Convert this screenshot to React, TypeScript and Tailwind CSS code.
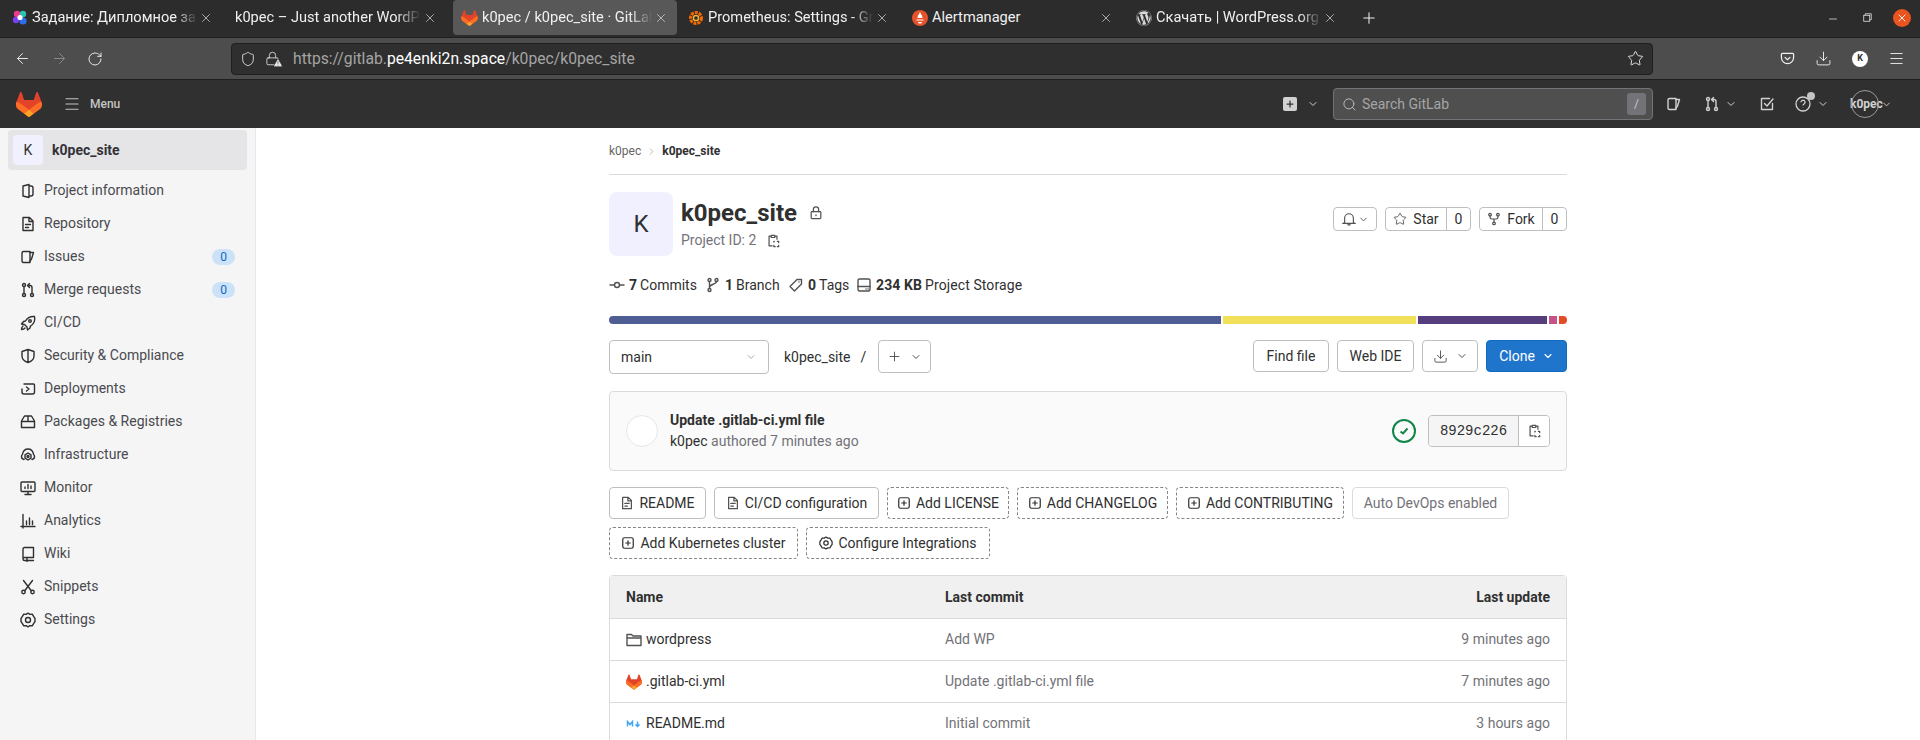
import React from 'react';
import { ArrowLeft, ArrowRight, RotateCw, Shield, Lock, Star, Download, Menu, Plus, Minus, X, Search, ChevronDown, ChevronRight, TriangleAlert } from 'lucide-react';
import { FaWordpress } from 'react-icons/fa';

const Ico: React.FC<{ className?: string; children: React.ReactNode }> = ({ className = 'w-4 h-4', children }) => (
    <svg viewBox="0 0 16 16" fill="none" stroke="currentColor" strokeWidth={1.4} strokeLinecap="round" strokeLinejoin="round" className={`shrink-0 ${className}`}>
        {children}
    </svg>
);

const Tanuki: React.FC<{ className?: string }> = ({ className = 'w-4 h-4' }) => (
    <svg viewBox="0 0 25 24" className={`shrink-0 ${className}`}>
        <path fill="#E24329" d="M24.507 9.5l-.034-.09L21.082.562a.896.896 0 00-1.694.091l-2.29 7.01H7.825L5.535.653a.898.898 0 00-1.694-.09L.451 9.411.416 9.5a6.297 6.297 0 002.09 7.278l.012.01.03.022 5.16 3.867 2.56 1.935 1.554 1.176a1.051 1.051 0 001.268 0l1.555-1.176 2.56-1.935 5.197-3.89.014-.01A6.297 6.297 0 0024.507 9.5z" />
        <path fill="#FC6D26" d="M24.507 9.5l-.034-.09a11.44 11.44 0 00-4.56 2.051l-7.447 5.632 4.742 3.584 5.197-3.89.014-.01A6.297 6.297 0 0024.507 9.5z" />
        <path fill="#FCA326" d="M7.707 20.677l2.56 1.935 1.555 1.176a1.051 1.051 0 001.268 0l1.555-1.176 2.56-1.935-4.743-3.584-4.755 3.584z" />
        <path fill="#FC6D26" d="M5.01 11.461a11.43 11.43 0 00-4.56-2.05L.416 9.5a6.297 6.297 0 002.09 7.278l.012.01.03.022 5.16 3.867 4.745-3.584-7.444-5.632z" />
    </svg>
);

const IssuesIcon = ({ className }: { className?: string }) => (
    <Ico className={className}><path d="M3.5 2.5h6.5v11H3.5a1.5 1.5 0 01-1.5-1.5V4a1.5 1.5 0 011.5-1.5z" /><path d="M10 3.5h3.5L11.5 10 10 12" /></Ico>
);
const MergeIcon = ({ className }: { className?: string }) => (
    <Ico className={className}><circle cx="4" cy="3" r="1.5" /><circle cx="4" cy="13" r="1.5" /><circle cx="12" cy="13" r="1.5" /><path d="M4 4.5v7M12 11.5V5.5a2 2 0 00-2-2H8M9.5 1.5l-2 2 2 2" /></Ico>
);
const FileIcon = ({ className }: { className?: string }) => (
    <Ico className={className}><path d="M3 1.5h6.5L13 5v9.5H3zM9 1.5V5.5h4M5.5 8.5h5M5.5 11.5h3" /></Ico>
);
const ForkIcon = ({ className }: { className?: string }) => (
    <Ico className={className}><circle cx="3.5" cy="3" r="1.5" /><circle cx="12.5" cy="3" r="1.5" /><circle cx="8" cy="13" r="1.5" /><path d="M3.5 4.5V6a2 2 0 002 2h5a2 2 0 002-2V4.5M8 8v3.5" /></Ico>
);
const ClipboardIcon = ({ className }: { className?: string }) => (
    <Ico className={className}><path d="M5.5 2.5H3.5v11H7M10.5 2.5h2V6M6 1.5h4v2.5H6z" /><path d="M9.5 8.5H9v.5M13 8.5h1.5V10M14.5 13v1.5H13M10.5 14.5H9V13" /></Ico>
);
const PlusBoxIcon = () => (
    <Ico className="w-[14px] h-[14px]"><rect x="2" y="2" width="12" height="12" rx="2" /><path d="M8 5.5v5M5.5 8h5" /></Ico>
);
const GearIcon = ({ className }: { className?: string }) => (
    <Ico className={className}><path d="M8 1.2l2 1.2 2.4-.1 1.2 2.1L15 6.5v3l-1.4 2.1-1.2 2.1-2.4-.1-2 1.2-2-1.2-2.4.1-1.2-2.1L1 9.500v-3l1.400-2.100 1.200-2.100 2.400.1z" /><circle cx="8" cy="8" r="2.500" /></Ico>
);

type NavItem = { label: string; icon: React.ReactNode; badge?: string };

const navItems: NavItem[] = [
    { label: 'Project information', icon: <Ico><path d="M3 3l6-1.500v13L3 13zM9 3h2a2 2 0 012 2v6a2 2 0 01-2 2H9" /></Ico> },
    { label: 'Repository', icon: <FileIcon /> },
    { label: 'Issues', icon: <IssuesIcon />, badge: '0' },
    { label: 'Merge requests', icon: <MergeIcon />, badge: '0' },
    { label: 'CI/CD', icon: <Ico><path d="M14.500 1.500c-4-.3-7 1-9 4.500l-2 .5-2 2.500 3 .5 2.500 2.500.5 3 2.500-2 .5-2c3.500-2 4.800-5 4-9.500z" /><circle cx="10" cy="6" r="1.300" /><path d="M3 11c-1 .8-1.500 2-1.500 3.500 1.500 0 2.700-.5 3.500-1.500" /></Ico> },
    { label: 'Security & Compliance', icon: <Ico><path d="M8 1.500l6 2v4.500c0 3.200-2.500 5.500-6 6.500-3.500-1-6-3.300-6-6.500V3.500zM8 1.500v13" /></Ico> },
    { label: 'Deployments', icon: <Ico><path d="M4 3h9.500a1 1 0 011 1v7a2 2 0 01-2 2H5M2 8v3a2 2 0 002 2M6.500 6l2.500 2-2.500 2" /></Ico> },
    { label: 'Packages & Registries', icon: <Ico><path d="M1.500 13.500V7L4.500 2h7l3 5v6.500zM1.500 7.500h13M8 2v5.500" /></Ico> },
    { label: 'Infrastructure', icon: <Ico><path d="M4 12.500a3 3 0 01-2.500-3c0-1 .5-1.800 1-2.300C3 4.500 5 2 8 2s5 2.500 5.500 5.200c.5.500 1 1.300 1 2.300a3 3 0 01-2.500 3" /><path d="M8 6l3 1.800v3.400L8 13l-3-1.800V7.800z" /><circle cx="8" cy="9.500" r="1" /></Ico> },
    { label: 'Monitor', icon: <Ico><rect x="1" y="2" width="14" height="9.500" rx="1" /><path d="M5 14.500h6M8 11.500v3M5 8.500V7M8 8.500V4.500M11 8.500V6" /></Ico> },
    { label: 'Analytics', icon: <Ico><path d="M1 13.500h14M3 1.500v13.500M6.500 11.500V8M9.500 11.500V5M12.500 11.500V8" /></Ico> },
    { label: 'Wiki', icon: <Ico><path d="M3 13V3a1.500 1.500 0 011.500-1.500h9v10h-9A1.500 1.500 0 003 13a1.500 1.500 0 001.500 1.500h9M7 11.500v4" /></Ico> },
    { label: 'Snippets', icon: <Ico><circle cx="3.500" cy="13" r="1.700" /><circle cx="12.500" cy="13" r="1.700" /><path d="M3.500 1.500l7.800 10.200M12.500 1.500L4.700 11.700" /></Ico> },
    { label: 'Settings', icon: <GearIcon /> },
];

const tabClass = 'w-[224px] h-[35px] flex items-center shrink-0 relative text-[14.6px] text-[#f0f0f0] rounded-[4px]';
const fade = 'overflow-hidden whitespace-nowrap [mask-image:linear-gradient(to_right,black_86%,transparent_99%)]';

const Tab: React.FC<{ title: string; icon?: React.ReactNode; active?: boolean; noFade?: boolean }> = ({ title, icon, active, noFade }) => (
    <div className={`${tabClass} ${active ? 'bg-[#585858] w-[220px] mx-[2px]' : ''}`}>
        <div className="w-[29px] shrink-0 flex justify-center pl-1">{icon}</div>
        <div className={`flex-1 min-w-0 ${noFade ? 'whitespace-nowrap' : fade}`}>{title}</div>
        <div className={`flex justify-start shrink-0 ${active ? 'w-[23px]' : 'w-[28px]'}`}><X className="w-[14px] h-[14px] text-[#e0e0e0]" strokeWidth={1.2} /></div>
    </div>
);

const BrowserChrome = () => (
    <>
        <div className="h-[38px] bg-[#2c2c2c] flex items-start pl-[3px] border-b border-[#1f1f1f]">
            <Tab
                title="Задание: Дипломное задание"
                icon={
                    <svg viewBox="0 0 16 16" className="w-4 h-4">
                        <circle cx="5" cy="4" r="3.200" fill="#ee3a8c" />
                        <circle cx="11" cy="4" r="3.200" fill="#2bc4b4" />
                        <circle cx="4" cy="10" r="3.200" fill="#7a3ff2" />
                        <circle cx="11" cy="11" r="3.600" fill="#2f6fed" />
                        <circle cx="8" cy="7.500" r="2.600" fill="#fff" />
                    </svg>
                }
            />
            <div className="w-[224px] h-[35px] flex items-center shrink-0 text-[14.6px] text-[#f0f0f0]">
                <div className={`flex-1 min-w-0 pl-[8px] ${fade}`}>k0pec – Just another WordPress site</div>
                <div className="w-[28px] flex justify-start shrink-0"><X className="w-[14px] h-[14px] text-[#e0e0e0]" strokeWidth={1.2} /></div>
            </div>
            <Tab active title="k0pec / k0pec_site · GitLab" icon={<Tanuki className="w-[17px] h-[16px]" />} />
            <Tab
                title="Prometheus: Settings - Grafana"
                icon={
                    <svg viewBox="0 0 16 16" className="w-4 h-4">
                        <circle cx="8" cy="8" r="5.500" fill="none" stroke="#f46800" strokeWidth="3" strokeDasharray="3 1" />
                        <circle cx="8" cy="8" r="2.600" fill="none" stroke="#fbb034" strokeWidth="1.500" />
                    </svg>
                }
            />
            <Tab
                noFade
                title="Alertmanager"
                icon={
                    <svg viewBox="0 0 16 16" className="w-4 h-4">
                        <circle cx="8" cy="8" r="8" fill="#e6522c" />
                        <path fill="#fff" d="M8 2c.5 2 2.500 3 2.500 6H5.500C5.500 5 7.500 4 8 2zM4.500 9.500h7v1h-7zM6 12h4c0 1-1 1.500-2 1.500S6 13 6 12z" />
                    </svg>
                }
            />
            <Tab title="Скачать | WordPress.org Русский" icon={<FaWordpress className="w-4 h-4 text-[#d8d8d8]" />} />
            <div className="flex justify-center w-[36px] h-[35px] items-center"><Plus className="w-[18px] h-[18px] text-[#f0f0f0]" strokeWidth={1.4} /></div>
            <div className="ml-auto flex items-center h-[35px] pr-[9px] text-[#f0f0f0]">
                <Minus className="w-[12px] h-[12px] mt-[3px]" strokeWidth={1.4} />
                <svg viewBox="0 0 12 12" className="w-[9px] h-[9px] ml-[24px]" fill="none" stroke="currentColor" strokeWidth="1"><rect x="1" y="3" width="8" height="8" /><path d="M3 3V1h8v8H9" /></svg>
                <div className="w-[18px] h-[18px] ml-[21px] rounded-full bg-[#e95420] flex items-center justify-center"><X className="w-[12px] h-[12px] text-white" strokeWidth={1.8} /></div>
            </div>
        </div>
        <div className="h-[42px] bg-[#4d4d4d] flex items-center border-b border-[#1f1f1f] text-[#f2f2f2]">
            <div className="flex items-center w-[231px] pl-[14px]">
                <ArrowLeft className="w-[17px] h-[17px]" strokeWidth={1.3} />
                <ArrowRight className="w-[17px] h-[17px] ml-[20px] text-[#8f8f8f]" strokeWidth={1.3} />
                <RotateCw className="w-[16px] h-[16px] ml-[19px]" strokeWidth={1.4} />
            </div>
            <div className="w-[1422px] h-[32px] bg-[#2f2f2f] border border-[#1f1f1f] rounded-[4px] flex items-center pl-[8px] pr-[8px]">
                <Shield className="w-[16px] h-[16px] text-[#e8e8e8]" strokeWidth={1.3} />
                <div className="relative w-[16px] h-[16px] ml-[9px]">
                    <Lock className="w-[15px] h-[15px] text-[#e8e8e8]" strokeWidth={1.3} />
                    <TriangleAlert className="absolute -bottom-[1px] -right-[2px] w-[10px] h-[10px] text-[#2f2f2f] fill-[#e8e8e8]" strokeWidth={1.5} />
                </div>
                <div className="ml-[12px] text-[15.7px] text-[#a5a5a5] whitespace-nowrap">https://gitlab.<span className="text-white">pe4enki2n.space</span>/k0pec/k0pec_site</div>
                <Star className="w-[17px] h-[17px] ml-auto text-[#ececec]" strokeWidth={1.3} />
            </div>
            <div className="flex-1 flex items-center pl-[127px]">
                <svg viewBox="0 0 16 16" className="w-[15px] h-[15px]" fill="none" stroke="currentColor" strokeWidth="1.300"><path d="M2.500 2.500h11a1 1 0 011 1V7A6.500 6.500 0 011.500 7V3.500a1 1 0 011-1z" /><path d="M5 6.500l3 2.800 3-2.800" /></svg>
                <Download className="w-[17px] h-[17px] ml-[20px]" strokeWidth={1.3} />
                <div className="w-[16px] h-[16px] ml-[20px] rounded-full bg-white text-[#303030] text-[9px] font-bold flex items-center justify-center">K</div>
                <Menu className="w-[17px] h-[17px] ml-[20px]" strokeWidth={1.3} />
            </div>
        </div>
    </>
);

const GitlabNav = () => (
    <div className="h-[48px] bg-[#303030] flex items-center text-[#d1d1d1]">
        <div className="pl-[16px] w-[63px]"><Tanuki className="w-[26px] h-[25px]" /></div>
        <Menu className="w-[18px] h-[18px] text-[#c4c4c4]" strokeWidth={1.5} />
        <div className="ml-[9px] text-[12px] font-medium text-[#c4c4c4]">Menu</div>
        <div className="ml-auto flex items-center">
            <div className="w-[14px] h-[14px] rounded-[2px] bg-[#d1d1d1] flex items-center justify-center"><Plus className="w-[10px] h-[10px] text-[#303030]" strokeWidth={3} /></div>
            <ChevronDown className="w-[12px] h-[12px] ml-[10px]" strokeWidth={2} />
            <div className="w-[320px] h-[32px] ml-[14px] bg-[#4f4f4f] border border-[#737278] rounded-[4px] flex items-center pl-[8px] pr-[6px]">
                <Search className="w-[15px] h-[15px] text-[#bfbfbf]" strokeWidth={1.5} />
                <div className="ml-[5px] text-[14px] text-[#a5a5a5]">Search GitLab</div>
                <div className="ml-auto w-[19px] h-[22px] rounded-[3px] bg-[#737278] text-[#c4c4c4] text-[12px] flex items-center justify-center">/</div>
            </div>
            <IssuesIcon className="w-[16px] h-[16px] ml-[13px]" />
            <MergeIcon className="w-[16px] h-[16px] ml-[22px]" />
            <ChevronDown className="w-[12px] h-[12px] ml-[5px]" strokeWidth={2} />
            <Ico className="w-[16px] h-[16px] ml-[22px]"><path d="M13.500 7.500v6h-11v-11h8M5.500 7.500l2.500 2.500 6-7" /></Ico>
            <div className="relative ml-[20px]">
                <svg viewBox="0 0 16 16" className="w-[16px] h-[16px]" fill="none" stroke="currentColor" strokeWidth="1.300"><circle cx="8" cy="8" r="7" /><path d="M6 6.200a2 2 0 113 1.800c-.7.400-1 .8-1 1.500M8 11.500v.3" /></svg>
                <div className="absolute -top-[4px] -right-[4px] w-[8px] h-[8px] rounded-full bg-[#c4c4c4]" />
            </div>
            <ChevronDown className="w-[12px] h-[12px] ml-[6px]" strokeWidth={2} />
            <div className="relative w-[48px] h-[28px] ml-[21px] mr-[22px] flex items-center">
                <div className="absolute left-[1px] top-0 w-[28px] h-[28px] rounded-full border border-[#9a9a9a]" />
                <div className="text-[12px] font-bold text-[#d1d1d1] whitespace-nowrap">k0pec</div>
                <ChevronDown className="absolute right-[6px] top-[9px] w-[11px] h-[11px]" strokeWidth={2} />
            </div>
        </div>
    </div>
);

const Sidebar = () => (
    <div className="w-[256px] shrink-0 bg-[#f5f5f5] border-r border-[#e8e8e8] pt-[2px] px-[8px] text-[#333238]">
        <div className="h-[40px] bg-[#e5e5e8] rounded-[4px] flex items-center pl-[5px]">
            <div className="w-[30px] h-[30px] bg-[#f0f0ff] rounded-[4px] flex items-center justify-center text-[14px] text-[#303030]">K</div>
            <div className="ml-[9px] text-[14px] font-bold">k0pec_site</div>
        </div>
        <div className="mt-[4px]">
            {navItems.map((item) => (
                <div key={item.label} className="h-[33px] flex items-center pl-[12px] pr-[12px] text-[14px] text-[#4a4a4f]">
                    <div className="text-[#303030]">{item.icon}</div>
                    <div className="ml-[8px]">{item.label}</div>
                    {item.badge && (
                        <div className="ml-auto w-[23px] h-[16px] rounded-full bg-[#cbe2f9] text-[#1068bf] text-[12px] flex items-center justify-center">{item.badge}</div>
                    )}
                </div>
            ))}
        </div>
    </div>
);

const outlineBtn = 'h-[32px] border border-[#bfbfbf] rounded-[4px] bg-white flex items-center justify-center text-[14px] text-[#303030]';
const dashedBtn = 'h-[32px] border border-dashed border-[#868686] rounded-[4px] bg-white flex items-center justify-center gap-[5px] text-[14px] text-[#303030] whitespace-nowrap';
const smallBtn = 'h-[24px] border border-[#bfbfbf] rounded-[4px] bg-white flex items-center text-[14px] text-[#303030]';

const Stat: React.FC<{ icon: React.ReactNode; num: string; label: string; className: string }> = ({ icon, num, label, className }) => (
    <div className={`flex items-center shrink-0 whitespace-nowrap ${className}`}>
        {icon}
        <span className="font-bold ml-[4px]">{num}</span>
        <span className="ml-[3px]">{label}</span>
    </div>
);

const files = [
    { name: 'wordpress', commit: 'Add WP', time: '9 minutes ago', icon: <Ico className="w-[16px] h-[16px] text-[#525252]"><path d="M1 13.500v-11h4.500L7 4h8v9.500zM1 6h14" /></Ico> },
    { name: '.gitlab-ci.yml', commit: 'Update .gitlab-ci.yml file', time: '7 minutes ago', icon: <Tanuki className="w-[16px] h-[16px]" /> },
    { name: 'README.md', commit: 'Initial commit', time: '3 hours ago', icon: <svg viewBox="0 0 16 16" className="w-[16px] h-[16px] shrink-0" fill="none" stroke="#42a5f5" strokeWidth="1.500"><path d="M1.500 10.500v-5l2.500 3 2.500-3v5M11.500 5.500v5M9.500 8.500l2 2 2-2" /></svg> },
];

const Main = () => (
    <div className="flex-1 min-w-0 overflow-hidden bg-white">
        <div className="w-[958px] mx-auto text-[#303030] text-[14px]">
            <div className="h-[47px] border-b border-[#dbdbdb] flex items-center text-[12px]">
                <span className="text-[#666]">k0pec</span>
                <ChevronRight className="w-[11px] h-[11px] mx-[5px] text-[#999]" strokeWidth={1.5} />
                <span className="font-bold">k0pec_site</span>
            </div>

            <div className="mt-[17px] h-[64px] flex">
                <div className="w-[64px] h-[64px] bg-[#f0f0ff] rounded-[8px] flex items-center justify-center text-[24px]">K</div>
                <div className="ml-[8px] pt-[1px]">
                    <div className="flex items-center h-[40px]">
                        <span className="text-[24px] font-bold">k0pec_site</span>
                        <Ico className="w-[14px] h-[14px] ml-[12px] text-[#525252]"><rect x="2.500" y="6.500" width="11" height="8" rx="1" /><path d="M5 6.500V4a3 3 0 016 0v2.500M8 10v1" /></Ico>
                    </div>
                    <div className="flex items-center text-[#737278] -mt-[3px]">
                        Project ID: 2
                        <ClipboardIcon className="w-[14px] h-[14px] ml-[10px] text-[#525252]" />
                    </div>
                </div>
                <div className="ml-auto flex items-start gap-[8px] pt-[15px]">
                    <div className={`${smallBtn} w-[44px] justify-center gap-[2px]`}>
                        <svg viewBox="0 0 16 16" className="w-[14px] h-[14px]" fill="none" stroke="#525252" strokeWidth="1.300"><path d="M3 12V7a5 5 0 0110 0v5l1.500 1h-13zM6.500 13.500a1.500 1.500 0 003 0" /></svg>
                        <ChevronDown className="w-[11px] h-[11px] text-[#525252]" strokeWidth={2} />
                    </div>
                    <div className={`${smallBtn} w-[86px]`}>
                        <div className="flex-1 flex items-center justify-center gap-[6px] border-r border-[#bfbfbf] h-full">
                            <Star className="w-[14px] h-[14px] text-[#525252]" strokeWidth={1.5} />Star
                        </div>
                        <div className="w-[23px] text-center">0</div>
                    </div>
                    <div className={`${smallBtn} w-[88px]`}>
                        <div className="flex-1 flex items-center justify-center gap-[6px] border-r border-[#bfbfbf] h-full">
                            <ForkIcon className="w-[14px] h-[14px] text-[#525252]" />Fork
                        </div>
                        <div className="w-[23px] text-center">0</div>
                    </div>
                </div>
            </div>

            <div className="mt-[18px] h-[22px] flex items-center">
                <Stat className="w-[96px]" num="7" label="Commits" icon={<Ico className="w-[16px] h-[16px] text-[#525252]"><circle cx="8" cy="8" r="2.500" /><path d="M1 8h4.500M10.500 8H15" /></Ico>} />
                <Stat className="w-[83px]" num="1" label="Branch" icon={<Ico className="w-[16px] h-[16px] text-[#525252]"><circle cx="4.500" cy="3" r="1.500" /><circle cx="4.500" cy="13" r="1.500" /><circle cx="11.500" cy="3" r="1.500" /><path d="M4.500 4.500v7M11.500 4.500c0 3-7 2.500-7 6" /></Ico>} />
                <Stat className="w-[68px]" num="0" label="Tags" icon={<Ico className="w-[16px] h-[16px] text-[#525252]"><path d="M2 9.500L9 2.500h4.500V7l-7 7zM11 5v.1" /></Ico>} />
                <Stat className="w-[200px] tracking-[0.1px]" num="234 KB" label="Project Storage" icon={<Ico className="w-[16px] h-[16px] text-[#525252]"><rect x="2" y="2" width="12" height="12" rx="1.500" /><path d="M2 9.500h12M10 12h.1M12 12h.1" /></Ico>} />
            </div>

            <div className="mt-[20px] h-[8px] flex gap-[2px] rounded-[4px] overflow-hidden">
                <div className="w-[612px] bg-[#4f5d95]" />
                <div className="w-[193px] bg-[#f1e05a]" />
                <div className="w-[129px] bg-[#563d7c]" />
                <div className="w-[8px] bg-[#c6538c]" />
                <div className="flex-1 bg-[#e34c26]" />
            </div>

            <div className="mt-[16px] flex items-start h-[34px]">
                <div className="w-[160px] h-[34px] border border-[#bfbfbf] rounded-[4px] flex items-center justify-between pl-[11px] pr-[11px]">
                    main
                    <ChevronDown className="w-[12px] h-[12px] text-[#aaa]" strokeWidth={2} />
                </div>
                <div className="ml-[15px] h-[34px] flex items-center">k0pec_site</div>
                <div className="ml-[10px] h-[34px] flex items-center">/</div>
                <div className={`${outlineBtn} w-[53px] h-[33px] ml-[12px] gap-[8px]`}>
                    <Plus className="w-[15px] h-[15px] text-[#525252]" strokeWidth={1.5} />
                    <ChevronDown className="w-[12px] h-[12px] text-[#525252]" strokeWidth={2} />
                </div>
                <div className="ml-auto flex gap-[8px]">
                    <div className={`${outlineBtn} w-[76px]`}>Find file</div>
                    <div className={`${outlineBtn} w-[77px]`}>Web IDE</div>
                    <div className={`${outlineBtn} w-[56px] gap-[8px]`}>
                        <Download className="w-[15px] h-[15px] text-[#525252]" strokeWidth={1.5} />
                        <ChevronDown className="w-[12px] h-[12px] text-[#525252]" strokeWidth={2} />
                    </div>
                    <div className="w-[81px] h-[32px] bg-[#1f75cb] border border-[#1068bf] rounded-[4px] text-white flex items-center justify-center gap-[7px]">
                        Clone<ChevronDown className="w-[12px] h-[12px]" strokeWidth={2.2} />
                    </div>
                </div>
            </div>

            <div className="mt-[17px] h-[80px] bg-[#fafafa] border border-[#dbdbdb] rounded-[4px] flex items-center pl-[16px] pr-[16px]">
                <div className="w-[32px] h-[32px] bg-white rounded-full border border-[#e6e6e6]" />
                <div className="ml-[12px] leading-[21px]">
                    <div className="font-bold">Update .gitlab-ci.yml file</div>
                    <div className="text-[#737278]"><span className="text-[#303030]">k0pec</span> authored 7 minutes ago</div>
                </div>
                <div className="ml-auto w-[24px] h-[24px] rounded-full border-2 border-[#108548] flex items-center justify-center">
                    <svg viewBox="0 0 12 12" className="w-[12px] h-[12px]" fill="none" stroke="#108548" strokeWidth="2"><path d="M2.500 6.500l2.500 2 4.500-5" /></svg>
                </div>
                <div className="ml-[12px] w-[122px] h-[32px] border border-[#bfbfbf] rounded-[4px] flex overflow-hidden">
                    <div className="flex-1 bg-[#f5f5f5] border-r border-[#bfbfbf] flex items-center justify-center font-['Liberation_Mono',monospace] text-[14px]">8929c226</div>
                    <div className="w-[30px] bg-white flex items-center justify-center"><ClipboardIcon className="w-[14px] h-[14px] text-[#525252]" /></div>
                </div>
            </div>

            <div className="mt-[16px] flex flex-wrap gap-x-[8px] gap-y-[8px]">
                <div className={`${outlineBtn} w-[97px] gap-[5px]`}><FileIcon className="w-[14px] h-[14px] text-[#525252]" />README</div>
                <div className={`${outlineBtn} w-[165px] gap-[5px]`}><FileIcon className="w-[14px] h-[14px] text-[#525252]" />CI/CD configuration</div>
                <div className={`${dashedBtn} w-[122px]`}><PlusBoxIcon />Add LICENSE</div>
                <div className={`${dashedBtn} w-[151px]`}><PlusBoxIcon />Add CHANGELOG</div>
                <div className={`${dashedBtn} w-[168px]`}><PlusBoxIcon />Add CONTRIBUTING</div>
                <div className="w-[157px] h-[32px] border border-[#dbdbdb] rounded-[4px] flex items-center justify-center text-[#737278] whitespace-nowrap">Auto DevOps enabled</div>
                <div className={`${dashedBtn} w-[189px]`}><PlusBoxIcon />Add Kubernetes cluster</div>
                <div className={`${dashedBtn} w-[184px]`}><GearIcon className="w-[14px] h-[14px]" />Configure Integrations</div>
            </div>

            <div className="mt-[16px] border border-[#dbdbdb] rounded-t-[4px]">
                <div className="h-[43px] bg-[#f0f0f0] grid grid-cols-[319px_1fr_200px] items-center px-[16px] font-bold border-b border-[#dbdbdb]">
                    <div>Name</div>
                    <div>Last commit</div>
                    <div className="text-right">Last update</div>
                </div>
                {files.map((file) => (
                    <div key={file.name} className="h-[42px] grid grid-cols-[319px_1fr_200px] items-center px-[16px] border-b border-[#dbdbdb]">
                        <div className="flex items-center gap-[4px]">{file.icon}{file.name}</div>
                        <div className="text-[#737278]">{file.commit}</div>
                        <div className="text-right text-[#737278]">{file.time}</div>
                    </div>
                ))}
            </div>
        </div>
    </div>
);

const App: React.FC = () => {
    return (
        <div className="h-[740px] overflow-hidden flex flex-col font-['Roboto',sans-serif] bg-white">
            <BrowserChrome />
            <GitlabNav />
            <div className="flex-1 min-h-0 flex">
                <Sidebar />
                <Main />
            </div>
        </div>
    );
};

export default App;
